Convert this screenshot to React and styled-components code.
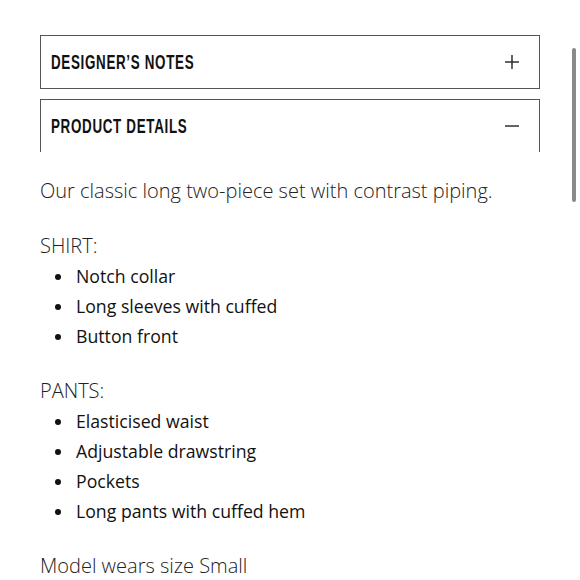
import React from "react";
import styled, { createGlobalStyle } from "styled-components";

const GlobalStyle = createGlobalStyle`
  html, body {
    margin: 0;
    background: #fff;
    overflow: hidden;
  }
`;

const Page = styled.div`
  padding: 35px 40px 0 40px;
  display: flex;
  flex-direction: column;
  gap: 10px;
`;

const Header = styled.div`
  display: flex;
  align-items: center;
  justify-content: space-between;
  padding: 0 20px 0 10px;
  border: 1px solid #555;
  border-bottom: ${(p) => (p.open ? "none" : "1px solid #555")};
  height: 52px;
`;

const Title = styled.span`
  display: inline-block;
  font-family: "Liberation Sans", Arial, sans-serif;
  font-weight: 700;
  font-size: 20px;
  letter-spacing: 1px;
  color: #111;
  text-transform: uppercase;
  transform: scaleX(0.67);
  transform-origin: left center;
  white-space: nowrap;
`;

const Body = styled.div`
  padding-top: 24px;
  font-family: "Open Sans", sans-serif;
  color: #222;
`;

const Para = styled.p`
  margin: 0 0 25px 0;
  font-size: 20px;
  font-weight: 300;
  line-height: 30px;
`;

const Label = styled.div`
  font-size: 20px;
  font-weight: 300;
  line-height: 30px;
`;

const List = styled.ul`
  margin: 0 0 25px 0;
  padding-left: 15px;
  list-style: none;
  font-size: 17.7px;
  font-weight: 400;
  line-height: 30px;
  color: #111;
`;

const Item = styled.li`
  display: flex;
  align-items: center;

  &::before {
    content: "";
    width: 6px;
    height: 6px;
    margin: 2px 15px 0 0;
    border-radius: 50%;
    background: #111;
    flex-shrink: 0;
  }
`;

const Scrollbar = styled.div`
  position: fixed;
  right: 4px;
  top: 48px;
  width: 4px;
  height: 154px;
  border-radius: 2px;
  background: #8a8a8a;
`;

const Icon = ({ open }) => (
  <svg width="14" height="14" viewBox="0 0 14 14">
    <line x1="0" y1="7" x2="14" y2="7" stroke="#222" strokeWidth="1.4" />
    {!open && <line x1="7" y1="0" x2="7" y2="14" stroke="#222" strokeWidth="1.4" />}
  </svg>
);

const sections = [
  { label: "SHIRT:", items: ["Notch collar", "Long sleeves with cuffed", "Button front"] },
  {
    label: "PANTS:",
    items: ["Elasticised waist", "Adjustable drawstring", "Pockets", "Long pants with cuffed hem"],
  },
];

export default function App() {
  return (
    <>
      <GlobalStyle />
      <Page>
        <Header>
          <Title>Designer’s Notes</Title>
          <Icon />
        </Header>
        <div>
          <Header open>
            <Title>Product Details</Title>
            <Icon open />
          </Header>
          <Body>
            <Para>Our classic long two-piece set with contrast piping.</Para>
            {sections.map((s) => (
              <div key={s.label}>
                <Label>{s.label}</Label>
                <List>
                  {s.items.map((item) => (
                    <Item key={item}>{item}</Item>
                  ))}
                </List>
              </div>
            ))}
            <Para>Model wears size Small</Para>
          </Body>
        </div>
      </Page>
      <Scrollbar />
    </>
  );
}
